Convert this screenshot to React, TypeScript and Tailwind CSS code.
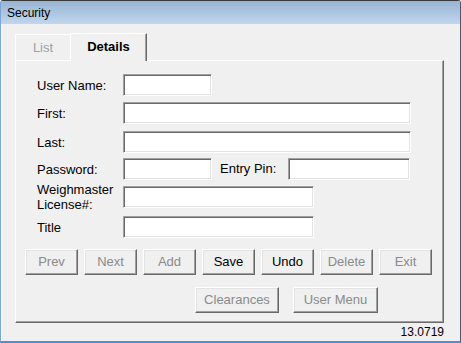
import { ReactNode } from 'react'

const font = { fontFamily: '"Liberation Sans", Arial, sans-serif' }

const Field = ({ w }: { w: string }) => (
  <div
    className={`${w} h-[22px] shrink-0 border-t border-l border-[#a0a0a0] border-r border-b border-r-white border-b-white bg-white shadow-[inset_1px_1px_0_#696969,inset_-1px_-1px_0_#e3e3e3]`}
  />
)

const Label = ({ children }: { children: ReactNode }) => (
  <div className="w-[107px] shrink-0 pl-[21px] text-[13px] leading-[15px] text-black">{children}</div>
)

const Row = ({ mt, children }: { mt: string; children: ReactNode }) => (
  <div className={`${mt} h-[22px] flex items-center`}>{children}</div>
)

const Btn = ({ label, on, w = 'w-[53px]' }: { label: string; on?: boolean; w?: string }) => (
  <div
    className={`${w} h-[26px] flex items-center justify-center border-t border-l border-white border-r border-b border-r-[#696969] border-b-[#696969] bg-[#f0f0f0] text-[13px] shadow-[inset_-1px_-1px_0_#a0a0a0,inset_1px_1px_0_#e3e3e3] ${
      on ? 'text-black' : 'text-[#8a8a8a]'
    }`}
  >
    {label}
  </div>
)

export default function App() {
  return (
    <div
      style={font}
      className="w-[461px] h-[343px] flex flex-col bg-[#f0f0f0] border-t border-t-[#3a3a3a] border-l border-l-[#7aa5d6] border-r border-r-[#3b5f80] border-b-2 border-b-[#4a90d9] rounded-tl-[3px] rounded-tr-[3px] overflow-hidden"
    >
      <div className="h-[23px] shrink-0 bg-gradient-to-b from-[#98b4d4] to-[#c2d6ed] pl-[6px] flex items-center text-[12px] text-black">
        Security
      </div>

      <div className="flex-1 border-l border-l-white/70">
        {/* tabs */}
        <div className="ml-[13px] mt-[9px] flex items-end h-[27px]">
          <div className="w-[55px] h-[26px] border-t border-l border-white flex items-center justify-center pt-[1px] text-[13px] text-[#a0a0a0]">
            List
          </div>
          <div className="relative z-10 -mb-px w-[77px] h-[28px] bg-[#f0f0f0] border-t border-l border-white border-r border-r-[#696969] shadow-[inset_-1px_0_0_#a0a0a0] flex items-center justify-center pb-[2px] text-[13px] font-bold text-black">
            Details
          </div>
        </div>

        {/* panel */}
        <div className="ml-[13px] w-[429px] h-[263px] border-t border-l border-white border-r border-b border-r-[#696969] border-b-[#696969] shadow-[inset_-1px_-1px_0_#a0a0a0]">
          <Row mt="mt-[13px]">
            <Label>User Name:</Label>
            <Field w="w-[89px]" />
          </Row>
          <Row mt="mt-[6px]">
            <Label>First:</Label>
            <Field w="w-[288px]" />
          </Row>
          <Row mt="mt-[7px]">
            <Label>Last:</Label>
            <Field w="w-[288px]" />
          </Row>
          <Row mt="mt-[5px]">
            <Label>Password:</Label>
            <Field w="w-[89px]" />
            <div className="w-[76px] pl-[8px] text-[13px] text-black">Entry Pin:</div>
            <Field w="w-[122px]" />
          </Row>
          <Row mt="mt-[6px]">
            <Label>
              Weighmaster
              <br />
              License#:
            </Label>
            <Field w="w-[191px]" />
          </Row>
          <Row mt="mt-[8px]">
            <Label>Title</Label>
            <Field w="w-[191px]" />
          </Row>

          <div className="mt-[11px] ml-[9px] flex gap-[6px]">
            <Btn label="Prev" />
            <Btn label="Next" />
            <Btn label="Add" />
            <Btn label="Save" on />
            <Btn label="Undo" on />
            <Btn label="Delete" />
            <Btn label="Exit" />
          </div>
          <div className="mt-[12px] ml-[179px] flex gap-[14px]">
            <Btn label="Clearances" w="w-[84px]" />
            <Btn label="User Menu" w="w-[85px]" />
          </div>
        </div>

        <div className="w-[442px] text-right text-[12px] leading-[14px] mt-[2px] text-black">13.0719</div>
      </div>
    </div>
  )
}
